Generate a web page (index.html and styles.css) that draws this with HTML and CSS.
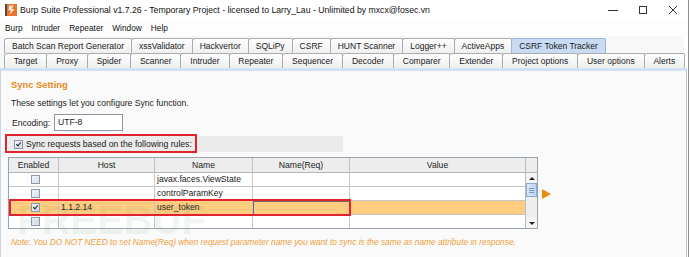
FILE: index.html
```html
<!DOCTYPE html>
<html>
<head>
<meta charset="utf-8">
<link rel="stylesheet" href="styles.css">
</head>
<body>
<div class="window">
  <div class="titlebar">
    <svg class="appicon" width="12" height="12" viewBox="0 0 12 12">
      <rect x="0" y="0" width="12" height="12" fill="#e8772e"/>
      <rect x="0" y="0" width="2" height="12" fill="#5a4a40"/>
      <path d="M4 1.5 L9 1.5 L6.5 5 L9.5 5 L4.5 11 L6 6.5 L3.5 6.5 Z" fill="#fbe6d6"/>
    </svg>
    <span class="title">Burp Suite Professional v1.7.26 - Temporary Project - licensed to Larry_Lau - Unlimited by mxcx@fosec.vn</span>
    <div class="winctrls">
      <svg width="10" height="10" viewBox="0 0 10 10"><path d="M0 5.5 H10" stroke="#333" stroke-width="1"/></svg>
      <svg width="10" height="10" viewBox="0 0 10 10"><rect x="1.5" y="1.5" width="7" height="7" fill="none" stroke="#333" stroke-width="1"/></svg>
      <svg width="10" height="10" viewBox="0 0 10 10"><path d="M1 1 L9 9 M9 1 L1 9" stroke="#333" stroke-width="1"/></svg>
    </div>
  </div>
  <div class="menubar">
    <span class="menu">Burp</span>
    <span class="menu">Intruder</span>
    <span class="menu">Repeater</span>
    <span class="menu">Window</span>
    <span class="menu">Help</span>
  </div>
  <div class="tabarea">
    <div class="tabrow">
      <span class="tab">Batch Scan Report Generator</span>
      <span class="tab">xssValidator</span>
      <span class="tab">Hackvertor</span>
      <span class="tab">SQLiPy</span>
      <span class="tab">CSRF</span>
      <span class="tab">HUNT Scanner</span>
      <span class="tab">Logger++</span>
      <span class="tab">ActiveApps</span>
      <span class="tab selected">CSRF Token Tracker</span>
    </div>
    <div class="tabrow stretch">
      <span class="tab">Target</span>
      <span class="tab">Proxy</span>
      <span class="tab">Spider</span>
      <span class="tab">Scanner</span>
      <span class="tab">Intruder</span>
      <span class="tab">Repeater</span>
      <span class="tab">Sequencer</span>
      <span class="tab">Decoder</span>
      <span class="tab">Comparer</span>
      <span class="tab">Extender</span>
      <span class="tab">Project options</span>
      <span class="tab">User options</span>
      <span class="tab">Alerts</span>
    </div>
  </div>
  <div class="panel">
    <div class="heading">Sync Setting</div>
    <div class="desc">These settings let you configure Sync function.</div>
    <div class="encrow">
      <span class="enclabel">Encoding:</span>
      <span class="encinput">UTF-8</span>
    </div>
    <div class="strip">
      <span class="cb checked"></span>
      <span class="striptext">Sync requests based on the following rules:</span>
    </div>
    <div class="tablerow">
      <div class="gridwrap">
        <div class="grid">
          <div class="hd">Enabled</div><div class="hd">Host</div><div class="hd">Name</div><div class="hd">Name(Req)</div><div class="hd">Value</div>
          <div class="c center"><span class="cb"></span></div><div class="c"></div><div class="c">javax.faces.ViewState</div><div class="c"></div><div class="c"></div>
          <div class="c center"><span class="cb"></span></div><div class="c"></div><div class="c">controlParamKey</div><div class="c"></div><div class="c"></div>
          <div class="c center sel"><span class="cb checked"></span></div><div class="c sel">1.1.2.14</div><div class="c sel">user_token</div><div class="c sel editing"></div><div class="c sel"></div>
          <div class="c center"><span class="cb"></span></div><div class="c"></div><div class="c"></div><div class="c"></div><div class="c"></div>
        </div>
        <div class="vscroll">
          <div class="vs-head"></div>
          <div class="vs-btn"><span class="up"></span></div>
          <div class="vs-thumb"><i></i><i></i><i></i></div>
          <div class="vs-track"></div>
          <div class="vs-btn"><span class="down"></span></div>
        </div>
      </div>
      <span class="arrow"></span>
    </div>
    <div class="note">Note: You DO NOT NEED to set Name(Req) when request parameter name you want to sync is the same as name attribute in response.</div>
  </div>
  <div class="watermark">FREEBUF</div>
  <div class="redbox box1"></div>
  <div class="redbox box2"></div>
</div>
</body>
</html>
```
FILE: styles.css
```css
html, body {
  margin: 0;
  padding: 0;
  background: #ffffff;
}
body {
  width: 690px;
  height: 257px;
  overflow: hidden;
  font-family: "Liberation Sans", Arial, sans-serif;
  color: #1a1a1a;
}
.window {
  position: relative;
  width: 688px;
  height: 257px;
  border-right: 1px solid #8f8f8f;
  background: #ffffff;
  display: flex;
  flex-direction: column;
}
.titlebar {
  height: 19px;
  display: flex;
  align-items: center;
  padding-left: 5px;
  background: #ffffff;
  flex: none;
}
.appicon {
  flex: none;
  margin-right: 3px;
  margin-top: 1px;
}
.title {
  font-size: 8.7px;
  color: #111;
  white-space: nowrap;
}
.winctrls {
  margin-left: auto;
  display: flex;
  gap: 20px;
  margin-right: 10px;
  align-items: center;
}
.menubar {
  height: 17px;
  display: flex;
  align-items: center;
  padding-left: 1px;
  background: #fdfdfd;
  flex: none;
}
.menu {
  font-size: 8.3px;
  padding: 0 4px;
  color: #111;
}
.menu + .menu {
  margin-left: 1px;
}
.tabarea {
  flex: none;
  padding-top: 2px;
  padding-left: 4px;
  background: #f8f8f8;
  width: 680px;
}
.tabrow {
  display: flex;
  height: 15px;
}
.tabrow.stretch .tab {
  flex: 1 1 auto;
}
.tab {
  box-sizing: border-box;
  height: 15px;
  padding: 0 7px;
  border: 1px solid #acacac;
  border-bottom: none;
  margin-right: -1px;
  border-radius: 3px 2px 0 0;
  background: linear-gradient(#fefefe, #efefef);
  font-size: 8.5px;
  line-height: 14px;
  white-space: nowrap;
  text-align: center;
  color: #1a1a1a;
}
.tab.selected {
  background: #c8dbf2;
  border-color: #9bb6dc;
  position: relative;
  z-index: 1;
}
.panel {
  flex: 1;
  border-top: 3px solid #d2e1f3;
  border-left: 1px solid #cbd6e4;
  border-right: 1px solid #b9c6d6;
  margin-right: 1px;
  background: #fafafa;
  padding-left: 7px;
}
.heading {
  margin-top: 8px;
  font-size: 9.4px;
  font-weight: bold;
  line-height: 12px;
  color: #e8891c;
  padding-left: 3px;
}
.desc {
  margin-top: 6px;
  font-size: 8.6px;
  line-height: 12px;
  padding-left: 3px;
}
.encrow {
  margin-top: 5px;
  display: flex;
  align-items: center;
  height: 17px;
}
.enclabel {
  font-size: 8.6px;
  padding-left: 4px;
  width: 42px;
}
.encinput {
  box-sizing: border-box;
  width: 69px;
  height: 17px;
  border: 1px solid #8e969f;
  background: #ffffff;
  font-size: 8.6px;
  line-height: 15px;
  padding-left: 3px;
}
.strip {
  margin-top: 5px;
  width: 335px;
  height: 16px;
  background: #ebebeb;
  display: flex;
  align-items: center;
  padding-left: 6px;
  box-sizing: border-box;
}
.striptext {
  font-size: 8.6px;
  margin-left: 3px;
}
.cb {
  display: inline-block;
  box-sizing: border-box;
  width: 9px;
  height: 9px;
  border: 1px solid #8a99ad;
  background: linear-gradient(135deg, #f4f7fb, #d5deea);
  position: relative;
}
.cb.checked::after {
  content: "";
  position: absolute;
  left: 2px;
  top: 0px;
  width: 2px;
  height: 4px;
  border: solid #222;
  border-width: 0 1.5px 1.5px 0;
  transform: rotate(40deg);
}
.tablerow {
  margin-top: 5px;
  display: flex;
  align-items: flex-start;
}
.gridwrap {
  display: flex;
  border: 1px solid #98a3b0;
  background: #ffffff;
}
.grid {
  display: grid;
  grid-template-columns: 50px 96px 98px 97px 175px;
  grid-template-rows: 15px 14px 14px 14px 13px;
}
.hd {
  box-sizing: border-box;
  background: #ededed;
  border-right: 1px solid #c2c2c2;
  border-bottom: 1px solid #b5b5b5;
  font-size: 8.6px;
  line-height: 14px;
  text-align: center;
  color: #222;
}
.c {
  box-sizing: border-box;
  border-right: 1px solid #c6c6c6;
  border-bottom: 1px solid #c6c6c6;
  font-size: 8.6px;
  line-height: 13px;
  padding-left: 2px;
  white-space: nowrap;
  background: #ffffff;
}
.c.center {
  display: flex;
  align-items: center;
  justify-content: center;
  padding-left: 4px;
}
.c.sel {
  background: #ffcc80;
}
.c.editing {
  border: 1px solid #6b6b6b;
}
.grid > div:nth-child(5n) {
  border-right: none;
}
.grid > div:nth-last-child(-n+5) {
  border-bottom: none;
}
.vscroll {
  width: 11px;
  border-left: 1px solid #b4bcc6;
  display: flex;
  flex-direction: column;
  background: #eeeeee;
}
.vs-head {
  height: 15px;
  background: #ededed;
  border-bottom: 1px solid #b5b5b5;
  box-sizing: border-box;
  flex: none;
}
.vs-btn {
  height: 10px;
  flex: none;
  display: flex;
  align-items: center;
  justify-content: center;
  background: #f4f4f4;
}
.up {
  width: 0;
  height: 0;
  border-left: 3px solid transparent;
  border-right: 3px solid transparent;
  border-bottom: 3px solid #222;
}
.down {
  width: 0;
  height: 0;
  border-left: 3px solid transparent;
  border-right: 3px solid transparent;
  border-top: 3px solid #222;
}
.vs-thumb {
  height: 14px;
  flex: none;
  box-sizing: border-box;
  border: 1px solid #8eaad2;
  background: linear-gradient(90deg, #dce8f7, #bcd2ee);
  display: flex;
  flex-direction: column;
  justify-content: center;
  align-items: center;
  gap: 1px;
}
.vs-thumb i {
  display: block;
  width: 5px;
  height: 1px;
  background: #7b97c2;
}
.vs-track {
  flex: 1;
}
.arrow {
  width: 0;
  height: 0;
  margin-left: 4px;
  margin-top: 32px;
  border-top: 5px solid transparent;
  border-bottom: 5px solid transparent;
  border-left: 9px solid #ec8b12;
}
.note {
  margin-top: 7px;
  font-size: 8.35px;
  font-style: italic;
  line-height: 12px;
  color: #eea03e;
  padding-left: 3px;
  white-space: nowrap;
}
.watermark {
  position: absolute;
  left: 17px;
  top: 206px;
  font-size: 40px;
  font-weight: bold;
  line-height: 28px;
  color: rgba(110, 150, 110, 0.1);
  pointer-events: none;
  white-space: nowrap;
}
.redbox {
  position: absolute;
  box-sizing: border-box;
  border: 2px solid #e2222c;
  pointer-events: none;
}
.box1 {
  left: 5px;
  top: 134px;
  width: 192px;
  height: 19px;
}
.box2 {
  left: 9px;
  top: 199px;
  width: 342px;
  height: 17px;
}
```
